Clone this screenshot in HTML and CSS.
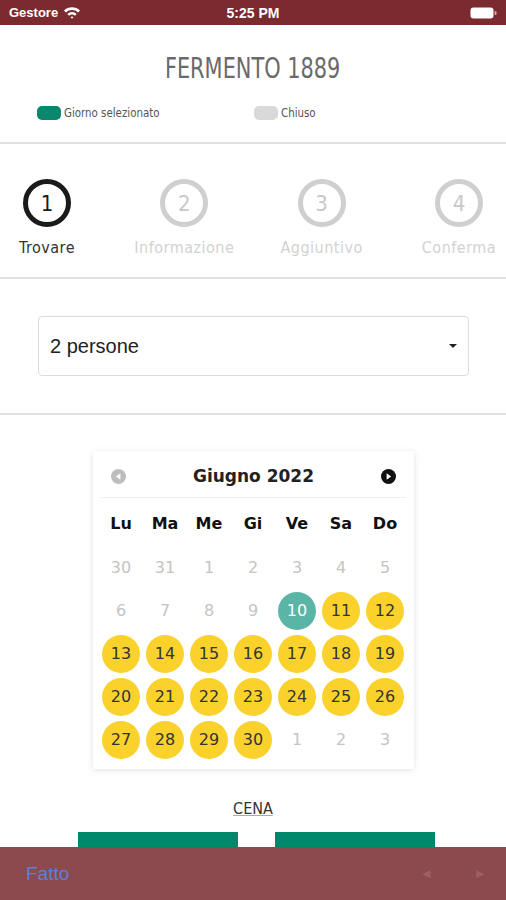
FILE: index.html
```html
<!DOCTYPE html>
<html>

<head>
    <meta charset="UTF-8">
    <title>Fermento 1889</title>
    <link rel="stylesheet" href="styles.css">
</head>

<body>

    <div class="status-bar">
        <div class="status-left">
            <span>Gestore</span>
            <svg class="wifi" width="18" height="13" viewBox="0 0 18 13">
                <path d="M1 4.6 A11.5 11.5 0 0 1 17 4.6 L15.2 6.5 A9 9 0 0 0 2.8 6.5 Z" fill="#fff" />
                <path d="M4.3 8 A6.7 6.7 0 0 1 13.7 8 L11.9 9.8 A4.2 4.2 0 0 0 6.1 9.8 Z" fill="#fff" />
                <path d="M7.5 11.2 A2.2 2.2 0 0 1 10.5 11.2 L9 12.8 Z" fill="#fff" />
            </svg>
        </div>
        <div class="status-time">5:25 PM</div>
        <div class="status-right">
            <svg width="27" height="12" viewBox="0 0 27 12">
                <rect x="0.5" y="0.5" width="23" height="11" rx="3" fill="#fff" />
                <rect x="24.5" y="4" width="2" height="4" rx="1" fill="#fff" opacity="0.6" />
            </svg>
        </div>
    </div>

    <header class="header">
        <h1 class="title"><span>FERMENTO 1889</span></h1>
        <div class="legend">
            <div class="legend-item legend-first"><span class="swatch swatch-green"></span><span class="legend-text">Giorno selezionato</span></div>
            <div class="legend-item"><span class="swatch swatch-grey"></span><span class="legend-text">Chiuso</span></div>
        </div>
    </header>

    <div class="divider"></div>

    <div class="steps">
        <div class="step active">
            <div class="step-circle">1</div>
            <div class="step-label">Trovare</div>
        </div>
        <div class="step">
            <div class="step-circle">2</div>
            <div class="step-label">Informazione</div>
        </div>
        <div class="step">
            <div class="step-circle">3</div>
            <div class="step-label">Aggiuntivo</div>
        </div>
        <div class="step">
            <div class="step-circle">4</div>
            <div class="step-label">Conferma</div>
        </div>
    </div>

    <div class="divider"></div>

    <div class="party">
        <div class="party-select">
            <span>2 persone</span>
            <span class="caret"></span>
        </div>
    </div>

    <div class="divider"></div>

    <div class="calendar">
        <div class="cal-head">
            <svg width="15" height="15" viewBox="0 0 16 16">
                <circle cx="8" cy="8" r="8" fill="#bdbdbd" />
                <path d="M10 4.5 L5.2 8 L10 11.5 Z" fill="#fff" />
            </svg>
            <div class="cal-title">Giugno 2022</div>
            <svg width="15" height="15" viewBox="0 0 16 16">
                <circle cx="8" cy="8" r="8" fill="#111" />
                <path d="M6 4.5 L10.8 8 L6 11.5 Z" fill="#fff" />
            </svg>
        </div>
        <div class="cal-grid" id="grid">
            <div class="dow">Lu</div>
            <div class="dow">Ma</div>
            <div class="dow">Me</div>
            <div class="dow">Gi</div>
            <div class="dow">Ve</div>
            <div class="dow">Sa</div>
            <div class="dow">Do</div>
        </div>
    </div>

    <div class="meal">CENA</div>

    <div class="slots">
        <div class="slot"></div>
        <div class="slot"></div>
    </div>

    <div class="toolbar">
        <span class="done">Fatto</span>
        <div class="arrows">
            <span class="arrow">&#9664;</span>
            <span class="arrow">&#9654;</span>
        </div>
    </div>

    <script>
        var grid = document.getElementById('grid');
        var days = [];
        // previous month tail, june, next month head
        days.push({ n: 30, cls: 'off' }, { n: 31, cls: 'off' });
        for (var i = 1; i <= 30; i++) {
            var cls = 'open';
            if (i < 10) cls = 'off';
            if (i == 10) cls = 'selected';
            days.push({ n: i, cls: cls });
        }
        days.push({ n: 1, cls: 'off' }, { n: 2, cls: 'off' }, { n: 3, cls: 'off' });

        var data = '';
        for (var j = 0; j < days.length; j++) {
            data += '<div class="day"><span class="' + days[j].cls + '">' + days[j].n + '</span></div>';
        }
        grid.innerHTML += data;
    </script>
</body>

</html>
```

FILE: styles.css
```css
body {
    margin: 0;
    background-color: #fff;
    font-family: "Liberation Sans", Arial, sans-serif;
    color: #222;
    height: 900px;
    overflow: hidden;
}

.status-bar {
    background-color: rgb(123, 42, 48);
    color: #fff;
    height: 25px;
    display: flex;
    align-items: center;
    justify-content: space-between;
    padding: 0 9px;
    font-weight: bold;
    font-size: 13px;
}

.status-left {
    display: flex;
    align-items: center;
    gap: 5px;
    width: 100px;
}

.status-time {
    font-size: 14px;
}

.status-right {
    width: 100px;
    display: flex;
    justify-content: flex-end;
}

.header {
    padding-top: 28px;
    height: 89px;
}

.title {
    margin: 0;
    text-align: center;
    font-family: "DejaVu Sans Condensed", "Liberation Sans Narrow", "Roboto", sans-serif;
    font-stretch: condensed;
    font-weight: 300;
    font-size: 29px;
    color: #6a6a6a;
    line-height: 30px;
}

.title span {
    display: inline-block;
    transform: scaleX(0.8);
}

.legend {
    display: flex;
    margin-top: 23px;
    padding-left: 37px;
    font-family: "DejaVu Sans Condensed", "Liberation Sans Narrow", "Roboto", sans-serif;
    font-stretch: condensed;
    font-size: 12px;
    color: #555;
}

.legend-item {
    display: flex;
    align-items: center;
    gap: 3px;
}

.legend-text {
    display: inline-block;
    transform: scaleX(0.95);
    transform-origin: left center;
}

.legend-first {
    width: 217px;
}

.swatch {
    width: 24px;
    height: 14px;
    border-radius: 5px;
    display: inline-block;
}

.swatch-green {
    background-color: #0a876c;
}

.swatch-grey {
    background-color: #d9d9d9;
}

.divider {
    height: 2px;
    background-color: #e0e0e0;
}

.steps {
    display: flex;
    justify-content: space-between;
    padding: 35px 23px 0;
    height: 98px;
}

.step {
    width: 48px;
    display: flex;
    flex-direction: column;
    align-items: center;
}

.step-circle {
    width: 38px;
    height: 38px;
    border: 5px solid #cfcfcf;
    border-radius: 50%;
    display: flex;
    align-items: center;
    justify-content: center;
    font-family: "DejaVu Sans Condensed", "Liberation Sans Narrow", "Roboto", sans-serif;
    font-stretch: condensed;
    font-weight: 300;
    font-size: 22px;
    color: #c8c8c8;
}

.step-label {
    margin-top: 11px;
    white-space: nowrap;
    font-family: "DejaVu Sans Condensed", "Liberation Sans Narrow", "Roboto", sans-serif;
    font-stretch: condensed;
    font-size: 16px;
    letter-spacing: 0.5px;
    color: #d2d2d2;
}

.step.active .step-circle {
    border-color: #1a1a1a;
    color: #1a1a1a;
}

.step.active .step-label {
    color: #333;
}

.party {
    padding: 37px 37px 37px 38px;
}

.party-select {
    height: 58px;
    border: 1px solid #dcdcdc;
    border-radius: 4px;
    display: flex;
    align-items: center;
    justify-content: space-between;
    padding: 0 11px;
    font-size: 20px;
    color: #222;
}

.caret {
    width: 0;
    height: 0;
    border-left: 4px solid transparent;
    border-right: 4px solid transparent;
    border-top: 4px solid #222;
}

.calendar {
    width: 305px;
    margin: 36px auto 0;
    padding: 4px 8px 8px;
    background-color: #fff;
    box-shadow: 0 1px 6px rgba(0, 0, 0, 0.12);
    font-family: "DejaVu Sans", Verdana, sans-serif;
}

.cal-head {
    display: flex;
    align-items: center;
    justify-content: space-between;
    padding: 0 9px 0 10px;
    height: 42px;
    border-bottom: 1px solid #f0f0f0;
}

.cal-title {
    font-weight: bold;
    font-size: 17px;
    color: #222;
}

.cal-grid {
    display: grid;
    grid-template-columns: repeat(7, 44px);
    grid-template-rows: 45px;
    grid-auto-rows: 43px;
    justify-content: center;
    padding-top: 3px;
}

.dow {
    display: flex;
    align-items: center;
    justify-content: center;
    font-weight: bold;
    font-size: 16px;
    color: #111;
}

.day {
    display: flex;
    align-items: center;
    justify-content: center;
}

.day span {
    width: 38px;
    height: 38px;
    border-radius: 50%;
    display: flex;
    align-items: center;
    justify-content: center;
    font-size: 16px;
}

.day .off {
    color: #c4c4c4;
}

.day .open {
    background-color: #fbd12c;
    color: #333;
}

.day .selected {
    background-color: #5bb5a6;
    color: #fff;
}

.meal {
    margin-top: 30px;
    text-align: center;
    font-family: "DejaVu Sans Condensed", "Liberation Sans Narrow", "Roboto", sans-serif;
    font-stretch: condensed;
    font-size: 16px;
    color: #333;
    text-decoration: underline;
    text-decoration-color: #aaa;
}

.slots {
    display: flex;
    justify-content: center;
    gap: 37px;
    margin-top: 14px;
    padding-left: 7px;
}

.slot {
    width: 160px;
    height: 40px;
    background-color: #00876c;
}

.toolbar {
    position: fixed;
    left: 0;
    right: 0;
    bottom: 0;
    height: 53px;
    background-color: rgb(140, 74, 79);
    display: flex;
    align-items: center;
    justify-content: space-between;
    padding: 0 26px;
}

.done {
    color: #5b80d8;
    font-size: 19px;
    font-family: "Liberation Sans", Arial, sans-serif;
}

.arrows {
    display: flex;
    gap: 46px;
    margin-right: -4px;
}

.arrow {
    color: rgba(255, 255, 255, 0.12);
    font-size: 11px;
}
```
